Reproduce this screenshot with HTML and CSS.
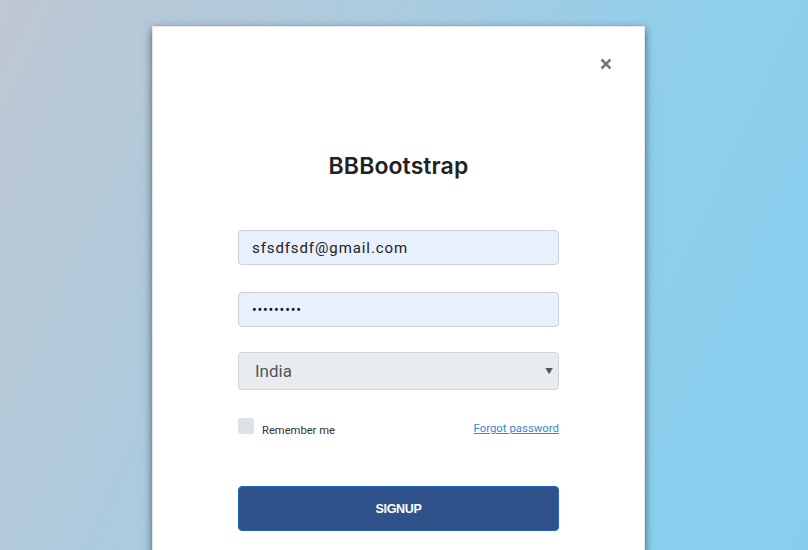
FILE: index.html
```html
<!DOCTYPE html>
<html>
<head>
<meta charset="utf-8">
<link rel="stylesheet" href="styles.css">
</head>
<body>
<div class="card">
  <div class="card-top">
    <button class="close" type="button" aria-label="Close">
      <svg width="12" height="12" viewBox="0 0 12 12"><path d="M1.5 1.5 L10.5 10.5 M10.5 1.5 L1.5 10.5" stroke="#777" stroke-width="2.6" stroke-linecap="butt"/></svg>
    </button>
  </div>
  <h1 class="title">BBBootstrap</h1>
  <form class="form">
    <input class="field" type="email" value="sfsdfsdf@gmail.com">
    <input class="field pass" type="password" value="123456789">
    <div class="select-wrap">
      <select class="select">
        <option>India</option>
      </select>
      <span class="arrow">▼</span>
    </div>
    <div class="row">
      <label class="remember"><span class="box"></span><span class="rem-text">Remember me</span></label>
      <a class="forgot" href="#">Forgot password</a>
    </div>
    <button class="signup" type="button">SIGNUP</button>
  </form>
</div>
</body>
</html>
```
FILE: styles.css
```css
html, body {
  margin: 0;
  padding: 0;
  height: 100%;
  overflow: hidden;
}
body {
  background: linear-gradient(115deg, #bec7d2 0%, #a9cbe0 40%, #8ecfec 68%, #87ceee 100%);
  font-family: Inter, "Noto Sans", sans-serif;
}
.card {
  width: 491px;
  margin: 26px 0 0 152px;
  height: 600px;
  background: #fff;
  border: 1px solid #e6e6e6;
  box-shadow: 0 3px 8px rgba(25, 45, 65, 0.7);
}
.card-top {
  display: flex;
  justify-content: flex-end;
  padding: 31px 32px 0 0;
}
.close {
  border: 0;
  background: none;
  padding: 0;
  width: 12px;
  height: 12px;
  display: flex;
  cursor: pointer;
}
.title {
  margin: 82px 0 0;
  text-align: center;
  font-size: 23px;
  font-weight: 600;
  color: #222;
  letter-spacing: 0.1px;
}
.form {
  width: 321px;
  margin: 50px 0 0 85px;
  display: flex;
  flex-direction: column;
}
.field {
  box-sizing: border-box;
  height: 35px;
  width: 100%;
  border: 1px solid #cdd1d6;
  border-radius: 4px;
  background: #e8f0fe;
  padding: 0 13px;
  font-family: Roboto, sans-serif;
  font-size: 15px;
  letter-spacing: 0.9px;
  color: #222;
  outline: none;
}
.pass {
  margin-top: 27px;
  font-size: 14px;
  letter-spacing: 0.8px;
  color: #111;
}
.select-wrap {
  position: relative;
  margin-top: 25px;
}
.select {
  box-sizing: border-box;
  width: 100%;
  height: 38px;
  appearance: none;
  -webkit-appearance: none;
  background: #e9ecef;
  border: 1px solid #cfd3d8;
  border-radius: 4px;
  padding: 0 16px;
  font-family: Roboto, sans-serif;
  font-size: 17px;
  color: #555;
  outline: none;
}
.arrow {
  position: absolute;
  right: 6px;
  top: 14px;
  font-size: 8px;
  color: #555;
  pointer-events: none;
}
.row {
  display: flex;
  justify-content: space-between;
  align-items: flex-start;
  margin-top: 28px;
  font-family: Roboto, sans-serif;
  font-size: 11.2px;
}
.remember {
  display: flex;
  align-items: flex-start;
  color: #333;
}
.box {
  width: 16px;
  height: 16px;
  border-radius: 3px;
  background: #dee2e6;
}
.rem-text {
  margin: 6px 0 0 8px;
}
.forgot {
  color: #3a86d4;
  text-decoration: underline;
  margin-top: 3px;
  font-size: 11.4px;
}
.signup {
  margin-top: 49px;
  height: 45px;
  width: 100%;
  background: #30528a;
  border: 1px solid #1f66c4;
  border-radius: 4px;
  color: #fff;
  font-family: "Liberation Sans", Arial, sans-serif;
  font-weight: 700;
  font-size: 12.5px;
  letter-spacing: -0.3px;
}
```
